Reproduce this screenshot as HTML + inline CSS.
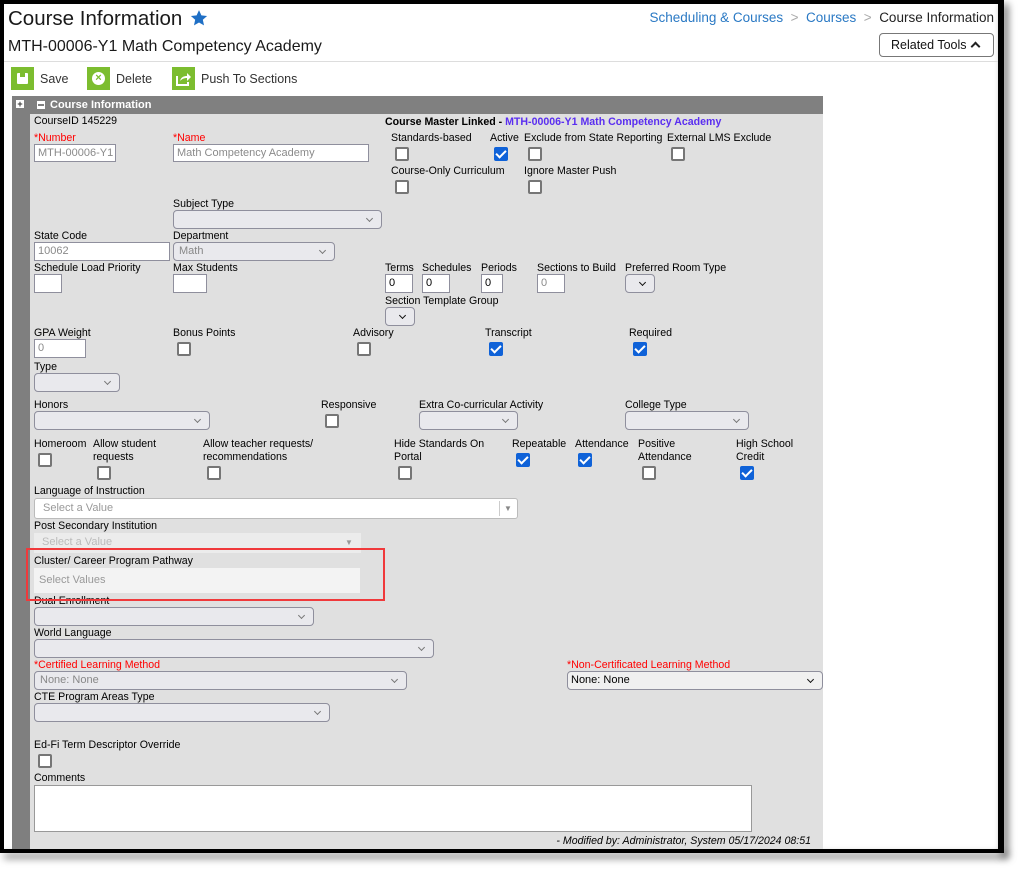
<!DOCTYPE html>
<html><head><meta charset="utf-8"><style>
*{box-sizing:border-box;margin:0;padding:0}
body{width:1026px;height:879px;background:#fff;position:relative;overflow:hidden;font-family:"Liberation Sans",Arial,sans-serif;font-size:11px;color:#000}
.a{position:absolute;white-space:nowrap}
.l{position:absolute;white-space:nowrap;font-size:10.6px;line-height:13px;margin-top:1px}
.r{color:#f00}
.in{position:absolute;background:#fff;border:1px solid #8f8f9d;height:18px;font-size:11px;line-height:16px;padding-left:3px;color:#000}
.dis{color:#8a8a8a}
.sel{position:absolute;background:#e9e9ed;border:1px solid #8f8f9d;border-radius:4px;height:19px}
.sel:after{content:"";position:absolute;right:9px;top:5px;width:4px;height:4px;border-right:1px solid #777;border-bottom:1px solid #777;transform:rotate(45deg)}
.sel.dk:after{border-color:#111;border-width:1.5px}
.cb{position:absolute;width:14px;height:14px;border:2px solid #767676;border-radius:2px;background:#fff}
.ck{position:absolute;width:14px;height:14px;border-radius:2px;background:#0f62d8}
.ck:after{content:"";position:absolute;left:4px;top:1px;width:4px;height:8px;border-right:2px solid #fff;border-bottom:2px solid #fff;transform:rotate(45deg)}
.gb{position:absolute;width:23px;height:23px;background:#7cbd2f}
</style></head><body>
<div class="a" style="left:0;top:0;width:1004px;height:4px;background:#000"></div>
<div class="a" style="left:0;top:0;width:4px;height:853px;background:#000"></div>
<div class="a" style="left:998px;top:0;width:6px;height:853px;background:#000;box-shadow:4px 4px 8px rgba(0,0,0,.6)"></div>
<div class="a" style="left:0;top:849px;width:1004px;height:4px;background:#000;box-shadow:4px 5px 8px rgba(0,0,0,.6)"></div>

<div class="a" style="left:8px;top:7px;font-size:20.5px;color:#1a1a1a">Course Information</div>
<svg class="a" style="left:190px;top:9px" width="18" height="18" viewBox="0 0 24 24"><path d="M12 1.5l3.2 7 7.6.8-5.7 5.1 1.6 7.5L12 18l-6.7 3.9 1.6-7.5L1.2 9.3l7.6-.8z" fill="#1f6fc5"/></svg>
<div class="a" style="left:8px;top:38px;font-size:16px;color:#1a1a1a">MTH-00006-Y1 Math Competency Academy</div>
<div class="a" style="left:4px;top:61px;width:994px;height:1px;background:#ddd"></div>
<div class="a" style="right:32px;top:10px;font-size:13.5px;color:#2a79c4">Scheduling &amp; Courses <span style="color:#aaa">&nbsp;&gt;&nbsp;</span> Courses <span style="color:#aaa">&nbsp;&gt;&nbsp;</span> <span style="color:#222">Course Information</span></div>
<div class="a" style="left:879px;top:33px;width:115px;height:24px;border:1px solid #777;border-radius:4px;font-size:12.5px;line-height:22px;padding-left:11px;color:#111">Related Tools <span style="position:absolute;right:14px;top:9px;width:7px;height:7px;border-left:2px solid #222;border-top:2px solid #222;transform:rotate(45deg)"></span></div>

<div class="gb" style="left:11px;top:67px"><div style="position:absolute;left:6px;top:6px;width:11px;height:11px;background:#fff;border-radius:1px"></div><div style="position:absolute;left:9px;top:6px;width:5px;height:4px;background:#7cbd2f"></div></div>
<div class="a" style="left:40px;top:72px;font-size:12.5px;color:#333">Save</div>
<div class="gb" style="left:87px;top:67px"><div style="position:absolute;left:5px;top:5px;width:13px;height:13px;background:#fff;border-radius:50%;color:#7cbd2f;font-size:11px;line-height:13px;text-align:center;font-weight:bold">×</div></div>
<div class="a" style="left:116px;top:72px;font-size:12.5px;color:#333">Delete</div>
<div class="gb" style="left:172px;top:67px"><svg style="position:absolute;left:4px;top:4px" width="15" height="15" viewBox="0 0 15 15"><path d="M1 5v9h11v-3" stroke="#fff" stroke-width="2" fill="none"/><path d="M4 10c1-4 4-5 7-5V2l4 4-4 4V7c-3 0-5 1-7 3z" fill="#fff"/></svg></div>
<div class="a" style="left:201px;top:72px;font-size:12.5px;color:#333">Push To Sections</div>

<div class="a" style="left:12px;top:96px;width:18px;height:753px;background:#7f7f7f"></div>
<div class="a" style="left:16px;top:100px;width:8px;height:8px;background:#fff;color:#333;font-size:9px;line-height:8px;text-align:center;font-weight:bold">+</div>
<div class="a" style="left:30px;top:96px;width:793px;height:18px;background:#808080"></div>
<div class="a" style="left:37px;top:101px;width:8px;height:8px;background:#fff"><div style="position:absolute;left:1px;top:3px;width:6px;height:2px;background:#808080"></div></div>
<div class="a" style="left:50px;top:99px;font-size:11px;font-weight:bold;color:#fff">Course Information</div>
<div class="a" style="left:30px;top:114px;width:793px;height:735px;background:#e0e0e0"></div>

<div class="l" style="left:34px;top:114px">CourseID 145229</div>
<div class="l" style="left:385px;top:115px;font-weight:bold">Course Master Linked - <span style="color:#5a2ef0">MTH-00006-Y1 Math Competency Academy</span></div>
<div class="l r" style="left:34px;top:131px">*Number</div>
<div class="in dis" style="left:34px;top:144px;width:82px">MTH-00006-Y1</div>
<div class="l r" style="left:173px;top:131px">*Name</div>
<div class="in dis" style="left:173px;top:144px;width:196px">Math Competency Academy</div>
<div class="l" style="left:391px;top:131px">Standards-based</div><div class="cb" style="left:395px;top:147px"></div>
<div class="l" style="left:490px;top:131px">Active</div><div class="ck" style="left:494px;top:147px"></div>
<div class="l" style="left:524px;top:131px">Exclude from State Reporting</div><div class="cb" style="left:528px;top:147px"></div>
<div class="l" style="left:667px;top:131px">External LMS Exclude</div><div class="cb" style="left:671px;top:147px"></div>
<div class="l" style="left:391px;top:164px">Course-Only Curriculum</div><div class="cb" style="left:395px;top:180px"></div>
<div class="l" style="left:524px;top:164px">Ignore Master Push</div><div class="cb" style="left:528px;top:180px"></div>

<div class="l" style="left:173px;top:197px">Subject Type</div>
<div class="sel" style="left:173px;top:210px;width:209px"></div>
<div class="l" style="left:34px;top:229px">State Code</div>
<div class="in dis" style="left:34px;top:242px;width:136px;height:19px">10062</div>
<div class="l" style="left:173px;top:229px">Department</div>
<div class="sel" style="left:173px;top:242px;width:162px;font-size:11px;line-height:17px;padding-left:5px;color:#888">Math</div>
<div class="l" style="left:34px;top:261px">Schedule Load Priority</div>
<div class="in" style="left:34px;top:274px;width:28px;height:19px"></div>
<div class="l" style="left:173px;top:261px">Max Students</div>
<div class="in" style="left:173px;top:274px;width:34px;height:19px"></div>
<div class="l" style="left:385px;top:261px">Terms</div><div class="in" style="left:385px;top:274px;width:28px;height:19px">0</div>
<div class="l" style="left:422px;top:261px">Schedules</div><div class="in" style="left:422px;top:274px;width:28px;height:19px">0</div>
<div class="l" style="left:481px;top:261px">Periods</div><div class="in" style="left:481px;top:274px;width:22px;height:19px">0</div>
<div class="l" style="left:537px;top:261px">Sections to Build</div><div class="in dis" style="left:537px;top:274px;width:28px;height:19px">0</div>
<div class="l" style="left:625px;top:261px">Preferred Room Type</div><div class="sel dk" style="left:625px;top:274px;width:30px"></div>
<div class="l" style="left:385px;top:294px">Section Template Group</div><div class="sel dk" style="left:385px;top:307px;width:30px"></div>

<div class="l" style="left:34px;top:326px">GPA Weight</div><div class="in dis" style="left:34px;top:339px;width:52px;height:19px">0</div>
<div class="l" style="left:173px;top:326px">Bonus Points</div><div class="cb" style="left:177px;top:342px"></div>
<div class="l" style="left:353px;top:326px">Advisory</div><div class="cb" style="left:357px;top:342px"></div>
<div class="l" style="left:485px;top:326px">Transcript</div><div class="ck" style="left:489px;top:342px"></div>
<div class="l" style="left:629px;top:326px">Required</div><div class="ck" style="left:633px;top:342px"></div>
<div class="l" style="left:34px;top:360px">Type</div><div class="sel" style="left:34px;top:373px;width:86px"></div>

<div class="l" style="left:34px;top:398px">Honors</div><div class="sel" style="left:34px;top:411px;width:176px"></div>
<div class="l" style="left:321px;top:398px">Responsive</div><div class="cb" style="left:325px;top:414px"></div>
<div class="l" style="left:419px;top:398px">Extra Co-curricular Activity</div><div class="sel" style="left:419px;top:411px;width:99px"></div>
<div class="l" style="left:625px;top:398px">College Type</div><div class="sel" style="left:625px;top:411px;width:124px"></div>

<div class="l" style="left:34px;top:437px">Homeroom</div><div class="cb" style="left:38px;top:453px"></div>
<div class="l" style="left:93px;top:437px">Allow student<br>requests</div><div class="cb" style="left:97px;top:466px"></div>
<div class="l" style="left:203px;top:437px">Allow teacher requests/<br>recommendations</div><div class="cb" style="left:207px;top:466px"></div>
<div class="l" style="left:394px;top:437px">Hide Standards On<br>Portal</div><div class="cb" style="left:398px;top:466px"></div>
<div class="l" style="left:512px;top:437px">Repeatable</div><div class="ck" style="left:516px;top:453px"></div>
<div class="l" style="left:575px;top:437px">Attendance</div><div class="ck" style="left:578px;top:453px"></div>
<div class="l" style="left:638px;top:437px">Positive<br>Attendance</div><div class="cb" style="left:642px;top:466px"></div>
<div class="l" style="left:736px;top:437px">High School<br>Credit</div><div class="ck" style="left:740px;top:466px"></div>

<div class="l" style="left:34px;top:484px">Language of Instruction</div>
<div class="a" style="left:34px;top:498px;width:484px;height:21px;background:#fff;border:1px solid #bbb;border-radius:3px;color:#999;line-height:19px;padding-left:8px">Select a Value<span style="position:absolute;left:464px;top:2px;width:1px;height:15px;background:#ccc"></span><span style="position:absolute;left:469px;top:0;font-size:8px;color:#888">▼</span></div>
<div class="l" style="left:34px;top:519px">Post Secondary Institution</div>
<div class="a" style="left:34px;top:533px;width:327px;height:20px;background:#ececec;color:#bbb;line-height:19px;padding-left:8px">Select a Value<span style="position:absolute;left:311px;top:0;font-size:8px;color:#999">▼</span></div>
<div class="l" style="left:34px;top:554px">Cluster/ Career Program Pathway</div>
<div class="a" style="left:34px;top:568px;width:326px;height:25px;background:#f3f3f3;color:#999;line-height:25px;padding-left:5px">Select Values</div>
<div class="l" style="left:34px;top:594px">Dual Enrollment</div>
<div class="a" style="left:26px;top:548px;width:359px;height:53px;border:2px solid #f0393b"></div>
<div class="sel" style="left:34px;top:607px;width:280px"></div>
<div class="l" style="left:34px;top:626px">World Language</div><div class="sel" style="left:34px;top:639px;width:400px"></div>
<div class="l r" style="left:34px;top:658px">*Certified Learning Method</div>
<div class="sel" style="left:34px;top:671px;width:373px;color:#888;line-height:17px;padding-left:5px">None: None</div>
<div class="l r" style="left:567px;top:658px">*Non-Certificated Learning Method</div>
<div class="sel dk" style="left:567px;top:671px;width:256px;background:#f0f0f0;line-height:17px;padding-left:3px">None: None</div>
<div class="l" style="left:34px;top:690px">CTE Program Areas Type</div><div class="sel" style="left:34px;top:703px;width:296px"></div>
<div class="l" style="left:34px;top:738px">Ed-Fi Term Descriptor Override</div><div class="cb" style="left:38px;top:754px"></div>
<div class="l" style="left:34px;top:771px">Comments</div>
<div class="a" style="left:34px;top:785px;width:718px;height:47px;background:#fff;border:1px solid #999"></div>
<div class="l" style="right:215px;top:834px;font-style:italic">- Modified by: Administrator, System 05/17/2024 08:51</div>
</body></html>
